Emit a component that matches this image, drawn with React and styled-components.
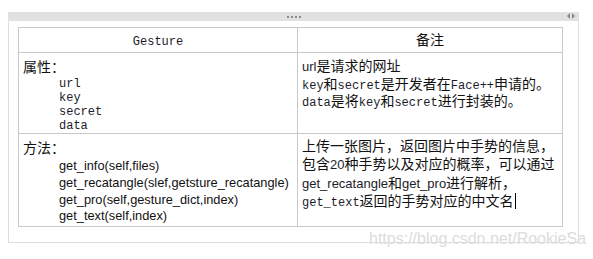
import React from "react";
import styled, { createGlobalStyle } from "styled-components";

const GlobalStyle = createGlobalStyle`
  body {
    margin: 0;
    background: #fff;
    font-family: "Noto Sans CJK SC", "Liberation Sans", sans-serif;
  }
`;

const Page = styled.div`
  position: relative;
  width: 593px;
  height: 259px;
  padding: 12px 14px 0 8px;
  box-sizing: border-box;
  overflow: hidden;
`;

const Frame = styled.div`
  width: 571px;
`;

const Bar = styled.div`
  position: relative;
  height: 9px;
  background: #e1e1e1;
  display: flex;
  align-items: center;
  justify-content: center;
`;

const Dots = styled.div`
  display: flex;
  gap: 2px;
  & > span {
    width: 2px;
    height: 2px;
    background: #8a8a8a;
  }
`;

const Arrows = styled.div`
  position: absolute;
  right: 4px;
  top: 1px;
  display: flex;
  gap: 2px;
`;

const Panel = styled.div`
  border: 1px solid #dedede;
  border-top: none;
  height: 222px;
  box-sizing: border-box;
  padding: 6px 16px 0 9px;
`;

const Table = styled.table`
  border-collapse: collapse;
  width: 545px;
  table-layout: fixed;
  color: #111;
`;

const Row = styled.tr`
  height: ${(p) => p.$h}px;
`;

const Cell = styled.td`
  border: 1px solid #c9c9c9;
  vertical-align: ${(p) => (p.$center ? "middle" : "top")};
  padding: ${(p) => p.$pad || "4px 4px 0"};
  text-align: ${(p) => (p.$center ? "center" : "left")};
  font-size: 14px;
  line-height: ${(p) => p.$lh || "17.5px"};
  overflow: hidden;
`;

const Cjk = styled.span`
  font-family: "Noto Sans CJK SC", sans-serif;
  font-size: 14px;
`;

const Mono = styled.span`
  font-family: "Liberation Mono", monospace;
  font-size: 12px;
  line-height: 1;
  color: #1c1c2a;
`;

const MonoList = styled.div`
  padding: 3px 0 0 36px;
  display: flex;
  flex-direction: column;
  font-family: "Liberation Mono", monospace;
  font-size: 12px;
  line-height: 14px;
  color: #1c1c2a;
`;

const SansList = styled.div`
  padding-left: 36px;
  display: flex;
  flex-direction: column;
  font-family: "Liberation Sans", sans-serif;
  font-size: 12.8px;
  line-height: 16.8px;
  color: #111;
`;

const Sans = styled.span`
  font-family: "Liberation Sans", sans-serif;
  font-size: 13px;
  line-height: 1;
  color: #1c1c2a;
`;

const Line = styled.div`
  white-space: nowrap;
  height: ${(p) => p.$lh || "auto"};
  line-height: ${(p) => p.$lh || "inherit"};
`;

const Cursor = styled.span`
  display: inline-block;
  width: 1px;
  height: 16px;
  background: #000;
  vertical-align: -3px;
  margin-left: 1px;
`;

const Watermark = styled.div`
  position: absolute;
  left: 369px;
  top: 230px;
  font-family: "Liberation Sans", sans-serif;
  font-size: 16px;
  color: #dcdcdc;
  white-space: nowrap;
`;

export default function App() {
  return (
    <>
      <GlobalStyle />
      <Page>
        <Frame>
          <Bar>
            <Dots>
              <span />
              <span />
              <span />
              <span />
            </Dots>
            <Arrows>
              <svg width="3" height="6" viewBox="0 0 3 6">
                <path d="M3 0 L0 3 L3 6 Z" fill="#8a8a8a" />
              </svg>
              <svg width="3" height="6" viewBox="0 0 3 6">
                <path d="M0 0 L3 3 L0 6 Z" fill="#8a8a8a" />
              </svg>
            </Arrows>
          </Bar>
          <Panel>
            <Table>
              <colgroup>
                <col style={{ width: 279 }} />
                <col />
              </colgroup>
              <tbody>
                <Row $h={25}>
                  <Cell $center $pad="0 4px">
                    <Mono>Gesture</Mono>
                  </Cell>
                  <Cell $center $pad="0 4px">
                    <Cjk>备注</Cjk>
                  </Cell>
                </Row>
                <Row $h={81}>
                  <Cell $pad="5px 4px 0">
                    <Line $lh="16px">
                      <Cjk>属性：</Cjk>
                    </Line>
                    <MonoList>
                      <span>url</span>
                      <span>key</span>
                      <span>secret</span>
                      <span>data</span>
                    </MonoList>
                  </Cell>
                  <Cell $pad="4px 4px 0">
                    <Line>
                      <Sans>url</Sans>是请求的网址
                    </Line>
                    <Line>
                      <Mono>key</Mono>和<Mono>secret</Mono>是开发者在<Mono>Face++</Mono>申请的。
                    </Line>
                    <Line>
                      <Mono>data</Mono>是将<Mono>key</Mono>和<Mono>secret</Mono>进行封装的。
                    </Line>
                  </Cell>
                </Row>
                <Row $h={93}>
                  <Cell $pad="2px 4px 0">
                    <Line $lh="22px">
                      <Cjk>方法：</Cjk>
                    </Line>
                    <SansList>
                      <span>get_info(self,files)</span>
                      <span>get_recatangle(slef,getsture_recatangle)</span>
                      <span>get_pro(self,gesture_dict,index)</span>
                      <span>get_text(self,index)</span>
                    </SansList>
                  </Cell>
                  <Cell $pad="2px 4px 0" $lh="18.3px">
                    <Line>上传一张图片，返回图片中手势的信息，</Line>
                    <Line>
                      包含<Sans>20</Sans>种手势以及对应的概率，可以通过
                    </Line>
                    <Line>
                      <Sans>get_recatangle</Sans>和<Sans>get_pro</Sans>进行解析，
                    </Line>
                    <Line>
                      <Mono>get_text</Mono>返回的手势对应的中文名
                      <Cursor />
                    </Line>
                  </Cell>
                </Row>
              </tbody>
            </Table>
          </Panel>
        </Frame>
        <Watermark>https://blog.csdn.net/RookieSa</Watermark>
      </Page>
    </>
  );
}
